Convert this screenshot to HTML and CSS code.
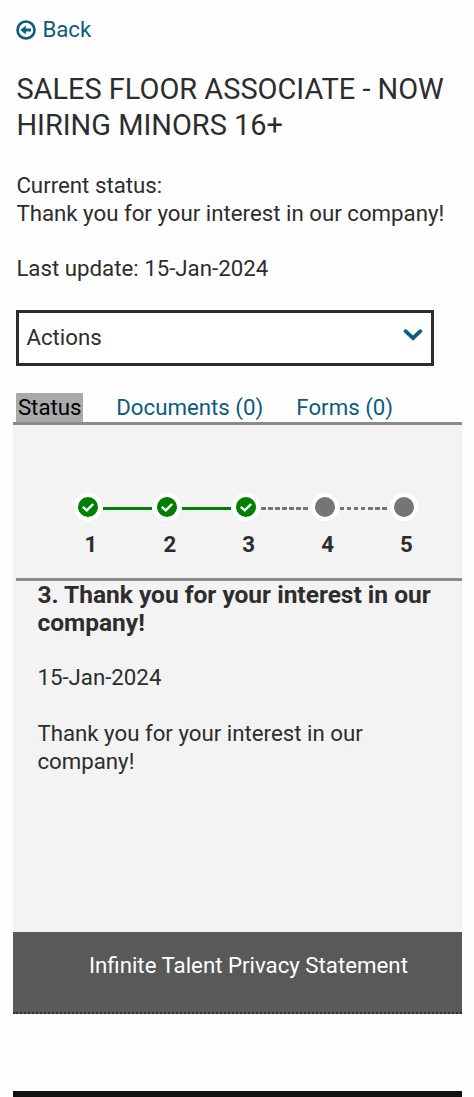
FILE: index.html
```html
<!DOCTYPE html>
<html lang="en">
<head>
    <meta charset="utf-8">
    <title>Application Status</title>
    <link rel="stylesheet" href="styles.css">
</head>
<body>
    <div class="job">
        <a class="back" href="#">
            <svg class="back-icon" viewBox="0 0 20 20">
                <circle cx="10" cy="10" r="8.5" fill="none" stroke="currentColor" stroke-width="2.6"/>
                <path d="M4.4 10 L9.8 5.6 V8.6 H15 V11.4 H9.8 V14.4 Z" fill="currentColor"/>
            </svg>
            <span>Back</span>
        </a>
        <h1>SALES FLOOR ASSOCIATE - NOW HIRING MINORS 16+</h1>
        <p class="current">Current status:<br>Thank you for your interest in our company!</p>
        <p class="updated">Last update: 15-Jan-2024</p>
        <div class="actions">
            <span>Actions</span>
            <svg class="chevron" viewBox="0 0 20 14">
                <path d="M2.6 3.2 L10 10.2 L17.4 3.2" fill="none" stroke="currentColor" stroke-width="3.8" stroke-linecap="round"/>
            </svg>
        </div>
    </div>

    <div class="tabs">
        <a class="tab active" href="#">Status</a>
        <a class="tab" href="#">Documents (0)</a>
        <a class="tab" href="#">Forms (0)</a>
    </div>

    <div class="panel">
        <ul class="steps">
            <li class="step done">
                <div class="track">
                    <span class="dot"><svg viewBox="0 0 20 20"><path d="M4.8 9.8 L8.8 13.4 L15.2 7"/></svg></span>
                    <span class="line"></span>
                </div>
                <b>1</b>
            </li>
            <li class="step done">
                <div class="track">
                    <span class="dot"><svg viewBox="0 0 20 20"><path d="M4.8 9.8 L8.8 13.4 L15.2 7"/></svg></span>
                    <span class="line"></span>
                </div>
                <b>2</b>
            </li>
            <li class="step done">
                <div class="track">
                    <span class="dot"><svg viewBox="0 0 20 20"><path d="M4.8 9.8 L8.8 13.4 L15.2 7"/></svg></span>
                    <span class="line dashed"></span>
                </div>
                <b>3</b>
            </li>
            <li class="step">
                <div class="track">
                    <span class="dot"></span>
                    <span class="line dashed"></span>
                </div>
                <b>4</b>
            </li>
            <li class="step">
                <div class="track">
                    <span class="dot"></span>
                </div>
                <b>5</b>
            </li>
        </ul>
        <div class="detail">
            <h2>3. Thank you for your interest in our company!</h2>
            <p>15-Jan-2024</p>
            <p>Thank you for your interest in our company!</p>
        </div>
    </div>

    <div class="footer">
        <a href="#">Infinite Talent Privacy Statement</a>
    </div>
    <div class="bottom-bar"></div>
</body>
</html>
```
FILE: styles.css
```css
* {
    box-sizing: border-box;
}

body {
    margin: 0;
    padding: 16px 12px 0 13px;
    height: 1097px;
    overflow: hidden;
    background-color: #fefefe;
    color: #2d2d2d;
    font-family: Roboto, "Liberation Sans", sans-serif;
    font-size: 22.25px;
    line-height: 27.8px;
}

h1, h2, p {
    margin: 0;
}

a {
    color: #0b5c80;
    text-decoration: none;
}

.job {
    padding-left: 3.4px;
}

.back {
    display: flex;
    align-items: center;
    gap: 6px;
}

.back-icon {
    width: 20px;
    height: 20px;
}

h1 {
    width: 440px;
    margin-top: 27px;
    font-size: 28.95px;
    font-weight: 400;
    line-height: 36px;
}

.current {
    margin-top: 29.4px;
    white-space: nowrap;
}

.updated {
    margin-top: 27.4px;
}

.actions {
    display: flex;
    justify-content: space-between;
    width: 417.6px;
    height: 56px;
    margin-top: 26.6px;
    padding: 11px 8px 0 7px;
    border: 3px solid #2d2d2d;
    background-color: #fff;
}

.chevron {
    width: 20px;
    height: 14px;
    margin-top: 4px;
    color: #0b5c80;
}

.tabs {
    display: flex;
    height: 32px;
    margin-top: 27px;
    padding-left: 3.4px;
    border-bottom: 3px solid #8a8a8a;
    line-height: 29px;
}

.tab {
    margin-right: 33.2px;
}

.active {
    padding: 0 1.5px;
    background-color: #a9a9a9;
    color: #000;
}

.panel {
    height: 507px;
    padding: 68px 0 0 3.4px;
    background-color: #f3f3f3;
}

.steps {
    display: flex;
    height: 88px;
    margin: 0;
    padding: 0 0 0 58px;
    list-style-type: none;
    border-bottom: 3px solid #8a8a8a;
}

.step {
    flex: none;
    width: 78.9px;
}

.step:last-child {
    width: 32px;
}

.track {
    display: flex;
    align-items: center;
}

.dot {
    flex: none;
    width: 28px;
    height: 28px;
    border: 4px solid #fff;
    border-radius: 50%;
    background-color: #757575;
}

.done .dot {
    background-color: #008000;
}

.dot svg {
    display: block;
    width: 20px;
    height: 20px;
    fill: none;
    stroke: #fff;
    stroke-width: 2.4;
}

.line {
    width: 49px;
    height: 3px;
    margin: 3px 0 0 1px;
    background-color: #008000;
}

.line.dashed {
    background: repeating-linear-gradient(to right, #757575 0 4.5px, transparent 4.5px 7px);
}

.step b {
    display: block;
    width: 28px;
    margin: 10px 0 0 2.5px;
    text-align: center;
}

.detail {
    padding: 0 20px 0 21px;
}

.detail h2 {
    font-size: 24.5px;
    line-height: 28px;
}

.detail p {
    width: 350px;
    margin-top: 27.8px;
}

.footer {
    height: 82px;
    padding: 20px 0 0 76px;
    border-bottom: 2px dotted #2d2d2d;
    background-color: #595959;
}

.footer a {
    color: #fff;
}

.bottom-bar {
    height: 10px;
    margin-top: 77px;
    background-color: #111;
}
```
